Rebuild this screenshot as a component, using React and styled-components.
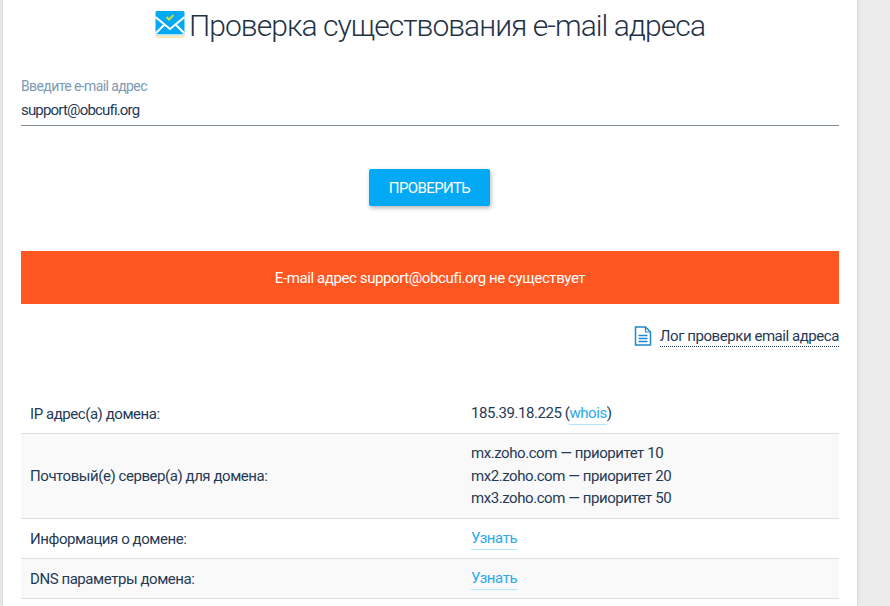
import styled, { createGlobalStyle } from "styled-components";

const GlobalStyle = createGlobalStyle`
  html, body {
    margin: 0;
    height: 100%;
    background: #ececec;
    overflow: hidden;
  }
  body {
    font-family: Roboto, "Noto Sans", sans-serif;
    color: #1f3a56;
  }
`;

const Card = styled.main`
  box-sizing: border-box;
  width: 854px;
  height: 606px;
  margin-left: 3px;
  padding: 0 18px;
  background: #fff;
  box-shadow: 0 0 4px rgba(0, 0, 0, 0.16);
  overflow: hidden;
`;

const Title = styled.h1`
  display: flex;
  justify-content: center;
  align-items: center;
  gap: 4px;
  height: 50px;
  margin: 0;
  font-size: 30px;
  font-weight: 300;
  letter-spacing: -0.95px;
  color: #1f3347;
`;

const Field = styled.label`
  display: block;
  box-sizing: border-box;
  height: 48px;
  margin-top: 28px;
  border-bottom: 1px solid #7f8c96;
`;

const FieldLabel = styled.span`
  display: block;
  height: 17px;
  font-size: 14px;
  line-height: 17px;
  letter-spacing: -0.6px;
  color: #7d99b3;
`;

const FieldValue = styled.span`
  display: block;
  margin-top: 5px;
  font-size: 15px;
  line-height: 20px;
  letter-spacing: -0.82px;
  color: #1f3a56;
`;

const ButtonRow = styled.div`
  display: flex;
  justify-content: center;
  margin-top: 43px;
  padding-right: 1px;
`;

const CheckButton = styled.button`
  width: 121px;
  height: 37px;
  border: none;
  border-radius: 2px;
  background: #03a9f4;
  box-shadow: 1px 2px 4px rgba(0, 0, 0, 0.3);
  color: #fff;
  font: 400 15px Roboto, sans-serif;
  letter-spacing: -0.6px;
`;

const Alert = styled.div`
  display: flex;
  align-items: center;
  justify-content: center;
  height: 53px;
  margin-top: 45px;
  background: #ff5722;
  color: #fff;
  font-size: 15px;
  letter-spacing: -0.4px;
`;

const LogRow = styled.div`
  display: flex;
  justify-content: flex-end;
  align-items: center;
  gap: 8px;
  height: 24px;
  margin-top: 20px;
`;

const LogLink = styled.a`
  font-size: 15px;
  line-height: 20px;
  letter-spacing: -0.44px;
  color: #1f3a56;
  border-bottom: 1px dotted #1f3a56;
`;

const Table = styled.div`
  margin-top: 46px;
  font-size: 15px;
  letter-spacing: -0.44px;
`;

const Row = styled.div`
  display: grid;
  grid-template-columns: 441px 1fr;
  align-items: center;
  box-sizing: border-box;
  height: ${(props) => props.$height}px;
  padding: 0 9px;
  background: ${(props) => (props.$shaded ? "#f9f9f9" : "#fff")};
  border-bottom: 1px solid #ddd;
`;

const Label = styled.span`
  color: #1f3a56;
`;

const Value = styled.div`
  line-height: 22.5px;
  color: #1f3a56;
`;

const MoreLink = styled.a`
  color: #29a9f0;
  padding-bottom: 2px;
  border-bottom: 1px solid #b3e5fc;
`;

const MailIcon = () => (
  <svg width="30" height="28" viewBox="0 0 30 28">
    <path d="M.5 24h29v3H.5z" fill="#ffe9b8" />
    <path d="M.5 23h29v1.500H.5z" fill="#b3e5fc" />
    <path
      d="M2 0h26a1.500 1.500 0 0 1 1.500 1.500V23H.5V1.500A1.500 1.500 0 0 1 2 0z"
      fill="#03a9f4"
    />
    <path
      d="M.5 6 15 18 29.500 6M.5 22.500 9.500 13.500M29.500 22.500 20.500 13.500"
      fill="none"
      stroke="#fff"
      strokeWidth="2"
    />
    <path
      d="M11.500 6 14 8.500 18.500 4"
      fill="none"
      stroke="#cddc39"
      strokeWidth="2"
    />
  </svg>
);

const DocIcon = () => (
  <svg width="18" height="20" viewBox="0 0 18 20">
    <path
      d="M1.500 1h10l5 5v13h-15z"
      fill="#fff"
      stroke="#1e88d0"
      strokeWidth="1.500"
    />
    <path d="M11.500 1v5h5" fill="none" stroke="#1e88d0" strokeWidth="1.200" />
    <path
      d="M4.500 9.500h9M4.500 12.500h9M4.500 15.500h9"
      fill="none"
      stroke="#1e88d0"
      strokeWidth="1.400"
    />
  </svg>
);

const App = () => (
  <>
    <GlobalStyle />
    <Card>
      <Title>
        <MailIcon />
        Проверка существования e-mail адреса
      </Title>
      <Field>
        <FieldLabel>Введите e-mail адрес</FieldLabel>
        <FieldValue>support@obcufi.org</FieldValue>
      </Field>
      <ButtonRow>
        <CheckButton>ПРОВЕРИТЬ</CheckButton>
      </ButtonRow>
      <Alert>E-mail адрес support@obcufi.org не существует</Alert>
      <LogRow>
        <DocIcon />
        <LogLink>Лог проверки email адреса</LogLink>
      </LogRow>
      <Table>
        <Row $height={40}>
          <Label>IP адрес(а) домена:</Label>
          <Value>
            185.39.18.225 (<MoreLink>whois</MoreLink>)
          </Value>
        </Row>
        <Row $height={85} $shaded>
          <Label>Почтовый(е) сервер(а) для домена:</Label>
          <Value>
            mx.zoho.com — приоритет 10
            <br />
            mx2.zoho.com — приоритет 20
            <br />
            mx3.zoho.com — приоритет 50
          </Value>
        </Row>
        <Row $height={40}>
          <Label>Информация о домене:</Label>
          <Value>
            <MoreLink>Узнать</MoreLink>
          </Value>
        </Row>
        <Row $height={40} $shaded>
          <Label>DNS параметры домена:</Label>
          <Value>
            <MoreLink>Узнать</MoreLink>
          </Value>
        </Row>
      </Table>
    </Card>
  </>
);

export default App;
